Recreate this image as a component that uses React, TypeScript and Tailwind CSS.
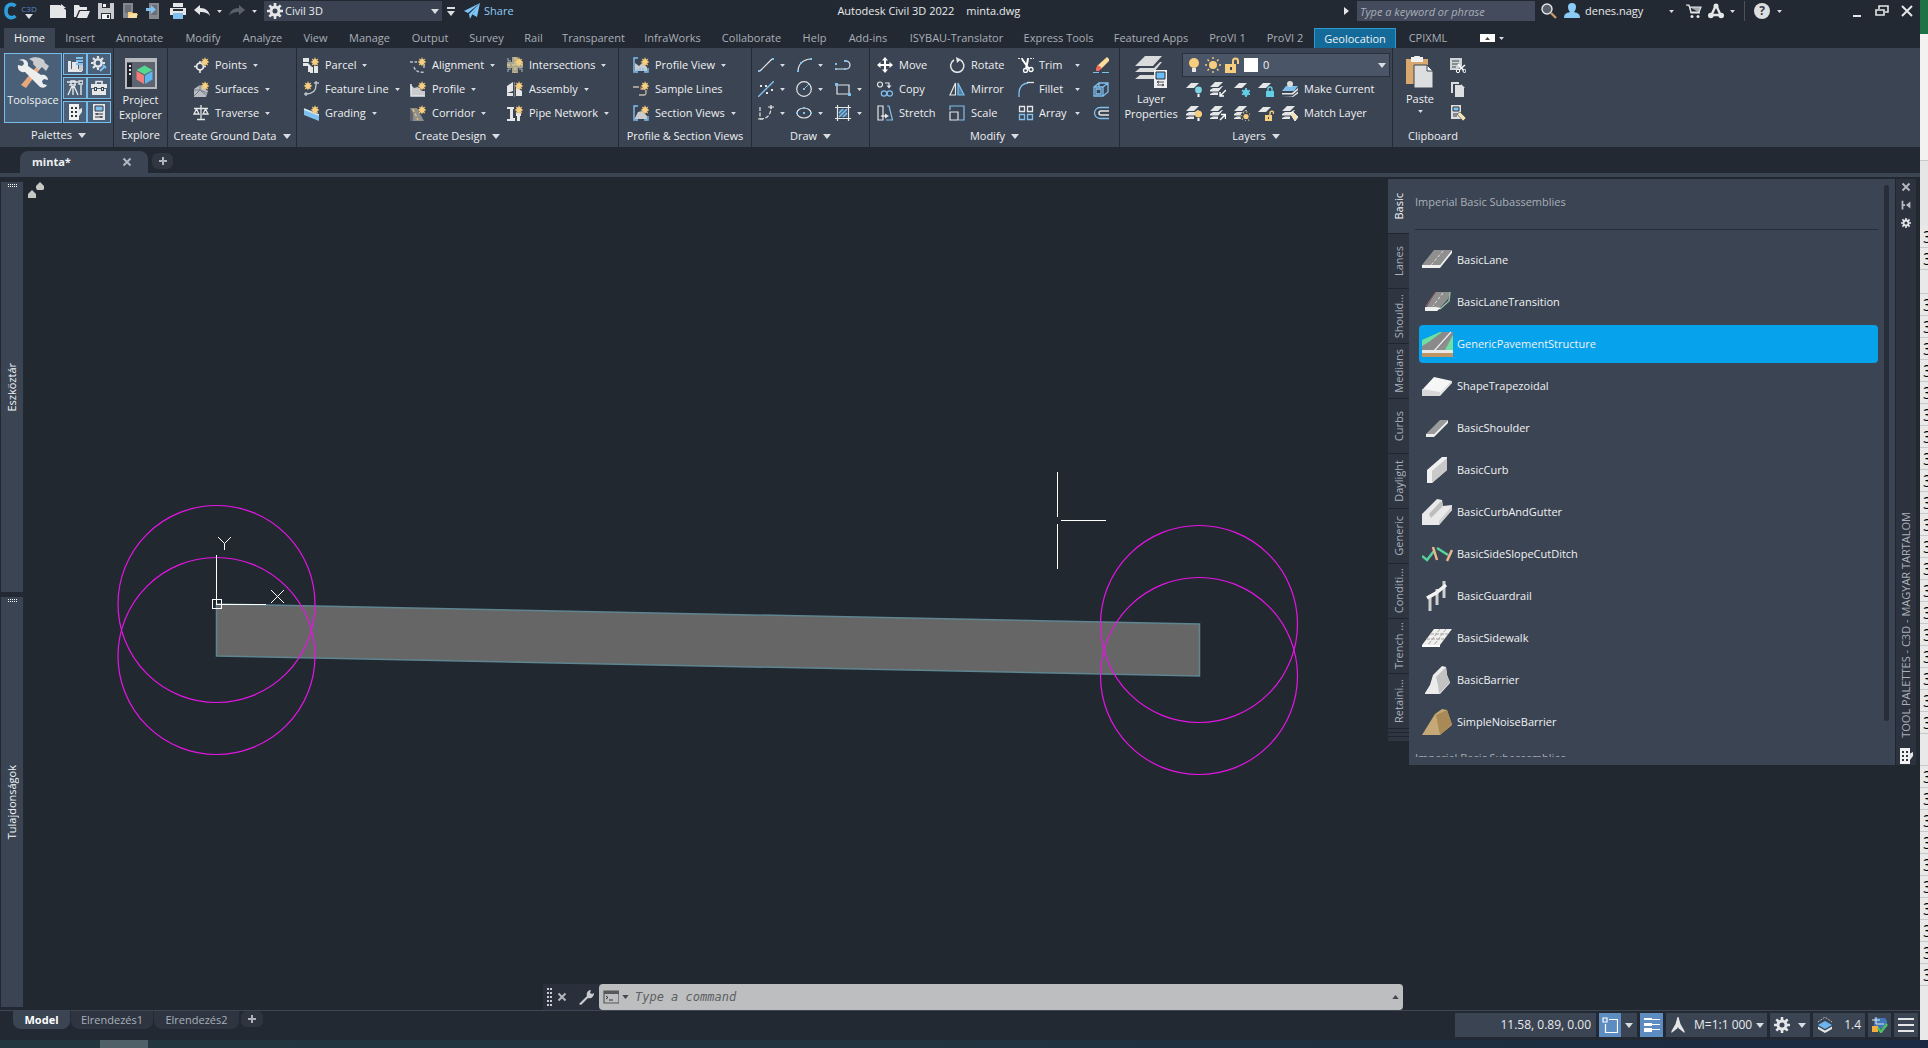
import type { ReactNode } from "react";
import { clsx } from "clsx";

type IconProps = { name: string; size?: number };

type RibbonItem = { icon: string; label: string; caret?: boolean };

const Y = "#f7ce7e";
const W = "#e4e6e8";
const B = "#7fc0ee";

const Spark = () => (
  <path
    d="M12 0l1 2.4L15.4 1.400 14.2 3.800 16.500 5l-2.300 1 1 2.400-2.300-1L12 9.600l-1-2.200-2.300 1 1-2.400L7.500 5l2.300-1.200-1-2.300 2.300 1z"
    fill={Y}
  />
);

const Sheets = () => (
  <path d="M5 1h8L8 6H0zM0 9l3-2h6l3-2h1L8.500 10.500H0zM0 13l3-1.500h5V14H0z" fill={W} />
);

const Sheet = () => <path d="M5 2h8L8 7H0z" fill={W} />;

const gear = (
  <>
    <circle cx="8" cy="8" r="4" fill="none" stroke={W} strokeWidth="3" />
    <path
      d="M8 0v3M8 13v3M0 8h3M13 8h3M2.300 2.300l2.200 2.200M11.500 11.500l2.200 2.200M2.300 13.700l2.200-2.200M11.500 4.500l2.200-2.200"
      stroke={W}
      strokeWidth="2.600"
    />
  </>
);

const icons: Record<string, ReactNode> = {
  gear,
  newFile: <path d="M0 2h10l6 5v8H0zM11 1l5 4h-5z" fill={W} />,
  open: <path d="M0 2h5l1 2h7v3H5L2 14H0zM6 8h10l-3 7H3z" fill={W} />,
  save: (
    <>
      <path d="M0 0h16v16H0z" fill="#c9cbce" />
      <path d="M4 0h8v5H4zM3 10h10v6H3z" fill="#2a303a" />
      <path d="M5 1h3v3H5zM4 11h8v5H4z" fill="#f1f1f1" />
      <path d="M9 12h2v3H9z" fill="#2a303a" />
    </>
  ),
  webOpen: (
    <>
      <path d="M1 0h10v8l-3 7H1z" fill="#85898f" />
      <path d="M3 2h6v8H3z" fill="#6a6f76" />
      <path d="M6 9h4l1 1h4v5H6z" fill={Y} />
      <path d="M8 11h8l-2 4H6z" fill="#f9dfa6" />
    </>
  ),
  webSave: (
    <>
      <path d="M3 0h10v16H3z" fill="#85898f" />
      <path d="M5 2h6v10H5z" fill="#6a6f76" />
      <path d="M0 5h5V2l5 4.500L5 11V8H0z" fill={B} />
    </>
  ),
  print: (
    <>
      <path d="M3 0h10v4H3zM0 5h16v7H0z" fill={W} />
      <path d="M3 6h10v2H3z" fill="#2a303a" />
      <path d="M3 10h10v6H3z" fill={B} />
    </>
  ),
  undo: <path d="M0 7l6-5v3c6 0 9 3 10 8-2-3-5-4-10-4v3z" fill={W} />,
  redo: <path d="M16 7l-6-5v3C4 5 1 8 0 13c2-3 5-4 10-4v3z" fill="#5a606a" />,
  share: <path d="M16 0L0 8l4 2zM16 0L5 11l1 5 2-4zM16 0L8.500 11.500 13 14z" fill="#7cc5f7" />,
  search: (
    <>
      <circle cx="6" cy="6" r="5" fill="#59606b" stroke={W} strokeWidth="1.400" />
      <path d="M10 10l5 5" stroke="#c39a6c" strokeWidth="2.400" />
    </>
  ),
  user: <path d="M8 0a4 4 0 0 1 4 4c0 2-1 4-2 5 4 1 6 2 6 6H0c0-4 2-5 6-6-1-1-2-3-2-5a4 4 0 0 1 4-4z" fill="#8ccbf7" />,
  cart: (
    <>
      <path d="M0 2h3l2 8h9M4 4h11l-2 5H5z" fill="#a3a7ac" stroke={W} strokeWidth="1.200" />
      <circle cx="6" cy="13.500" r="1.500" fill={W} />
      <circle cx="12" cy="13.500" r="1.500" fill={W} />
    </>
  ),
  appStore: (
    <>
      <path d="M8 2L3 13M8 2l5 11M3 12h10" stroke={W} strokeWidth="2.400" fill="none" />
      <circle cx="8" cy="3" r="2.500" fill={W} />
      <circle cx="2.800" cy="12.500" r="2.800" fill={W} />
      <circle cx="13.200" cy="12.500" r="2.800" fill={W} />
    </>
  ),
  min: <path d="M4 12h8v2H4z" fill={W} />,
  restore: <path d="M5 6V3h9v6h-3M2 7h8v5H2z" fill="none" stroke={W} strokeWidth="1.600" />,
  close: <path d="M3 3l10 10M13 3L3 13" stroke={W} strokeWidth="2" />,
  boldX: <path d="M4 4l8 8M12 4l-8 8" stroke="#b4b9c0" strokeWidth="2.200" />,
  plus: <path d="M8 4v8M4 8h8" stroke="#aeb3ba" strokeWidth="2" />,
  toolspace: (
    <>
      <path d="M4 28L20 9l3 3L9 31z" fill="#e9a77c" />
      <path d="M12 2c5-3 11-2 15 1l1 3 4 3-3 5-4-4-3 3-6-6c1-2 0-3-4-5z" fill="#c9cbce" />
      <path d="M2 3l4 1 1 3-2 2-4-1c-1 4 2 8 7 7l13 13c2 3 7 4 9 0l-4-1-1-3 2-2 4 1c0-4-4-6-7-5L11 9c1-5-4-8-9-6z" fill="#eceded" />
    </>
  ),
  explorer: (
    <>
      <path d="M1 2h30v29H1z" fill="#5d646f" stroke="#b6b9bd" strokeWidth="2" />
      <path d="M0 1h32v4H0z" fill="#b6b9bd" />
      <path d="M2 6h5v24H2z" fill="#20252d" />
      <path d="M4 8h2v2H4zM4 12h2v2H4zM4 16h2v2H4z" fill={W} />
      <path d="M11.500 13L19.500 8.500l8 4.500-8 4.500z" fill="#55d78e" />
      <path d="M11.500 14L19 18.500V27l-7.500-4.500z" fill="#f27b7b" />
      <path d="M27.500 14L20 18.500V27l7.500-4.500z" fill="#5cb6f2" />
    </>
  ),
  survey1: (
    <>
      <path d="M1 5h3v8h11v3H1zM5 6h6v8H5z" fill={W} />
      <path d="M9 1h7v2H9zM9 4h7v2H9zM9 7h7v2H9z" fill={B} />
      <path d="M12 9h4v6h-4z" fill="#c9cbce" />
    </>
  ),
  settings: (
    <>
      <circle cx="7" cy="7" r="3.600" fill="none" stroke={W} strokeWidth="2.400" />
      <path d="M7 0v2.500M7 11.500V14M0 7h2.500M11.500 7H14M2 2l2 2M10 4l2-2M2 12l2-2" stroke={W} strokeWidth="2.200" />
      <path d="M9 15l5-5M12 9l3 3" stroke={B} strokeWidth="2" />
    </>
  ),
  tripod: (
    <path d="M0 2h11M2 5h7M5 6L1 15M6 6v9M7 6l4 9M14 5v10M12 1h4v3h-4zM4 1h4v4H4z" fill="none" stroke={W} strokeWidth="1.400" />
  ),
  toolbox: (
    <>
      <path d="M5 4V1.500h6V4" fill="none" stroke={W} strokeWidth="1.600" />
      <path d="M0 4h16v4H0zM1 9h14v6H1z" fill={W} />
      <path d="M3 7h3v4H3zM10 7h3v4h-3z" fill="#3b4452" />
      <path d="M4 8h1v2H4zM11 8h1v2h-1z" fill={W} />
    </>
  ),
  sheetSet: (
    <>
      <path d="M2 0h10v16H2z" fill="#f1f1f1" />
      <path d="M4 3h2v2H4zM8 3h2v2H8zM4 7h2v2H4zM8 7h2v2H8zM4 11h2v2H4zM8 11h2v2H8z" fill="#30363f" />
      <path d="M11 6l4-2v4l-3 4z" fill={W} />
    </>
  ),
  props: (
    <>
      <path d="M2 0h12v16H2z" fill={W} />
      <path d="M4 2h8v5H4z" fill={B} stroke="#30363f" />
      <path d="M4 10h8M4 13h8M6 9v2M10 12v2" stroke="#30363f" strokeWidth="1.200" />
    </>
  ),
  points: (
    <>
      <circle cx="7" cy="9.500" r="3.400" fill="none" stroke={W} strokeWidth="1.800" />
      <path d="M7 4v3M7 12v4M1 9.500h3M10 9.500h3" stroke={W} strokeWidth="1.600" />
      <Spark />
    </>
  ),
  surfaces: (
    <>
      <path d="M1 8l6-4 8 6-2 6H1z" fill="#b9bdc2" />
      <path d="M1 15l6-6 7 6M7 9V4M1 9h6l7 3" stroke="#7a8089" fill="none" />
      <Spark />
    </>
  ),
  traverse: (
    <path d="M8 0v14M4 14.500h8M1 3.500h14M3.500 4L1 9h5zM12.500 4L10 9h5z" fill="none" stroke={W} strokeWidth="1.300" />
  ),
  parcel: (
    <>
      <path d="M0 1h6v4H0zM0 6h5l4 4v5H5V9H0zM7 10h3v6H7zM11 9h4v7h-4z" fill={W} />
      <Spark />
    </>
  ),
  featureLine: (
    <>
      <path d="M3 13c6 0 10-3 10-9M1 13h4M3 11v4M11 2h5M13 0v4" fill="none" stroke="#b9c2cc" strokeWidth="1.400" />
      <g transform="translate(-7 0)">
        <Spark />
      </g>
    </>
  ),
  grading: (
    <>
      <path d="M1 4l15 6v6L1 10z" fill={B} />
      <path d="M1 4l15 6" stroke="#d7ecfb" strokeWidth="1.500" />
      <Spark />
    </>
  ),
  alignment: (
    <>
      <path d="M0 5h7M4 10c1 4 5 6 11 5M14 8v4" fill="none" stroke="#b9c2cc" strokeWidth="1.400" strokeDasharray="3 1.500" />
      <Spark />
    </>
  ),
  profile: (
    <>
      <path d="M0 3l4 4 4-1 4 4h3v5H1z" fill="#c9cbce" />
      <path d="M1 3v12h14" fill="none" stroke={W} strokeWidth="1.400" />
      <Spark />
    </>
  ),
  corridor: (
    <>
      <path d="M0 3h7l7 13H3V9z" fill="#8e8f8c" />
      <path d="M3 4l5 11" stroke="#e9c46f" strokeWidth="1.400" strokeDasharray="3 2" />
      <path d="M0 3l3 6v7H0z" fill="#5d646f" />
      <Spark />
    </>
  ),
  intersections: (
    <>
      <path d="M5 0h6v16H5zM0 5h16v6H0z" fill="#a9a58c" />
      <path d="M8 0v16M0 8h16" stroke="#e5d59d" strokeDasharray="3 2" />
      <path d="M1 1v3h3M1 15v-3h3M15 15v-3h-3" stroke="#aeb6c0" fill="none" />
      <Spark />
    </>
  ),
  assembly: (
    <>
      <path d="M0 5l6-4v9l-6 2zM9 6l6 4v5H9zM0 12h6v3H0z" fill={W} />
      <path d="M7.500 1v15" stroke="#7a8089" strokeWidth="1.200" />
      <Spark />
    </>
  ),
  pipes: (
    <>
      <path d="M0 2h7v2H6v9h2v3H0v-2h3V4H0zM9 8h5v3h-1v5h-3v-5H9z" fill={W} />
      <Spark />
    </>
  ),
  profileView: (
    <>
      <path d="M2 6l4 3 3-3 5 4v4H2z" fill="#c9cbce" />
      <path d="M5 1H1v14h4M11 15h4v-4M4 12v2M7 11v3M10 11v3" fill="none" stroke={B} strokeWidth="1.400" />
      <Spark />
    </>
  ),
  sampleLines: (
    <>
      <path d="M0 6h6M8 8h4M6 14h5c2 0 2-1 2-3V9" fill="none" stroke="#c5b9ad" strokeWidth="1.400" />
      <path d="M8 6v3" stroke="#e08b6b" />
      <Spark />
    </>
  ),
  sectionViews: (
    <>
      <path d="M2 13l3-6 4-1 5 5v3H2z" fill="#c9cbce" />
      <path d="M5 1H1v14h4M11 15h4v-4" fill="none" stroke={B} strokeWidth="1.400" />
      <Spark />
    </>
  ),
  line: (
    <>
      <path d="M2 14L14 2" stroke={W} strokeWidth="1.200" />
      <path d="M0 13h2v2H0zM14 1h2v2h-2z" fill={B} />
    </>
  ),
  arc: (
    <>
      <path d="M2 15C2 7 7 3 14 2" stroke={W} fill="none" strokeWidth="1.200" />
      <path d="M1 13h2v2H1zM14 1h2v2h-2zM4 5h2v2H4z" fill={B} />
    </>
  ),
  polyline: (
    <>
      <path d="M1 12h10a4 4 0 0 0 0-8" stroke={W} fill="none" strokeWidth="1.200" />
      <path d="M0 11h2v2H0zM9 3h3v2H9zM9 11h2v2H9zM0 6h2v2H0z" fill={B} />
    </>
  ),
  xline: (
    <>
      <path d="M0 16L16 0" stroke={B} strokeWidth="1.400" />
      <path d="M2 4h2v2H2zM7 4h2v2H7zM8 11h2v2H8zM13 8h2v2h-2z" fill={W} />
    </>
  ),
  circle: (
    <>
      <circle cx="8" cy="8" r="7.300" fill="none" stroke={W} strokeWidth="1.200" />
      <path d="M8 8l5-5" stroke={B} />
      <path d="M7 7h2v2H7z" fill={B} />
    </>
  ),
  rect: (
    <>
      <path d="M2 4h12v9H2z" fill="none" stroke={W} strokeWidth="1.200" />
      <path d="M0 2h3v3H0zM13 12h3v3h-3z" fill={B} />
    </>
  ),
  spline: (
    <>
      <path d="M2 2v12M2 14c7 0 11-4 11-12" fill="none" stroke={W} strokeWidth="1.200" strokeDasharray="4 1.500" />
      <path d="M10 2h6M13 0v4M0 14h5" stroke={W} strokeWidth="1.200" />
    </>
  ),
  ellipse: (
    <>
      <ellipse cx="8" cy="8" rx="7" ry="5" fill="none" stroke={W} strokeWidth="1.200" />
      <path d="M7 7h2v2H7zM0 7h2v2H0zM14 7h2v2h-2zM7 2h2v2H7z" fill={B} />
    </>
  ),
  hatch: (
    <>
      <path d="M4 4h8v8H4z" fill="#4a6e8e" />
      <path d="M2.500 0v16M13.500 0v16M0 2.500h16M0 13.500h16" stroke={W} strokeWidth="1.200" />
      <path d="M4 8l4-4M4 12l8-8M8 12l4-4" stroke={B} strokeWidth="1.400" />
    </>
  ),
  move: (
    <path
      d="M8 0l3 3.500H9V7h3.500V5L16 8l-3.500 3V9H9v3.500h2L8 16l-3-3.500h2V9H3.500v2L0 8l3.500-3v2H7V3.500H5z"
      fill="#fff"
    />
  ),
  rotate: (
    <>
      <path d="M5 3a6.600 6.600 0 1 0 6.500 0" fill="none" stroke={W} strokeWidth="1.500" />
      <path d="M7 0l5 2.500L8 6z" fill={W} />
    </>
  ),
  copy: (
    <>
      <circle cx="3" cy="3.500" r="2.500" fill="none" stroke={W} strokeWidth="1.200" />
      <circle cx="7" cy="12.500" r="2.700" fill="none" stroke={B} strokeWidth="1.200" />
      <circle cx="12.800" cy="12.500" r="2.700" fill="none" stroke={B} strokeWidth="1.200" />
      <path d="M8 2h4v3" fill="none" stroke={W} strokeWidth="1.200" />
      <path d="M9.500 4.500h5L12 7.500z" fill={W} />
    </>
  ),
  mirror: (
    <>
      <path d="M6.500 2v12H1z" fill="none" stroke={W} strokeWidth="1.200" />
      <path d="M9 2v12h6z" fill="#4d84ad" stroke={B} strokeWidth="1.200" />
    </>
  ),
  stretch: (
    <>
      <path d="M1 1h5v14H1z" fill="none" stroke={W} strokeWidth="1.200" />
      <path d="M10 1h2l3.500 14H9" fill="none" stroke={B} strokeWidth="1.200" />
      <path d="M4 11h5" stroke={W} strokeWidth="1.400" />
      <path d="M8 8.500l4 2.500-4 2.500z" fill={W} />
    </>
  ),
  scale: (
    <>
      <path d="M1 5V1h14v14h-5" fill="none" stroke={B} strokeWidth="1.200" />
      <path d="M1 7h8v8H1z" fill="none" stroke={W} strokeWidth="1.200" />
    </>
  ),
  trim: (
    <>
      <path d="M0 1.500h6M9 1.500h7" stroke={W} strokeDasharray="2 1" />
      <path d="M4 2l7 10M10 2L8 12" stroke="#fff" strokeWidth="2" />
      <circle cx="7.500" cy="13.500" r="2" fill="none" stroke="#fff" strokeWidth="1.300" />
      <circle cx="13" cy="12.500" r="2" fill="none" stroke="#fff" strokeWidth="1.300" />
    </>
  ),
  fillet: (
    <>
      <path d="M1 16v-4C1 6 5 2 10 2" fill="none" stroke={B} strokeWidth="1.300" />
      <path d="M9 1.500h7" stroke={W} strokeWidth="1.300" />
    </>
  ),
  array: (
    <>
      <path d="M1.500 1.500h5v5h-5zM9.500 1.500h5v5h-5z" fill="none" stroke={W} strokeWidth="1.300" />
      <path d="M1.500 9.500h5v5h-5zM9.500 9.500h5v5h-5z" fill="none" stroke={B} strokeWidth="1.300" />
    </>
  ),
  erase: (
    <>
      <path d="M14 0l2 2v2L8 12l-4-3z" fill="#fbdc9c" />
      <path d="M5 8l4 3-3 3H3v-3z" fill="#ef6a5a" />
      <path d="M0 15.500h6M9 15.500h7" stroke={B} />
    </>
  ),
  explode: (
    <path d="M1 6h9v9H1zM3 8h5v5H3zM1 6l5-4h9v9l-5 4M10 6l5-4M6 2v4" fill="none" stroke={B} strokeWidth="1.300" />
  ),
  offset: (
    <>
      <path d="M16 2.500H7a5.500 5.500 0 0 0 0 11h9" fill="none" stroke={B} strokeWidth="1.300" />
      <path d="M16 6H8a2 2 0 0 0 0 4h8" fill="none" stroke={W} strokeWidth="1.500" />
    </>
  ),
  layerProps: (
    <>
      <path d="M10 0h17l-9 10H0zM0 16l5-4h14l6-6h2l-8 10zM0 23l5-4h14v4z" fill="#d9dbdd" />
      <path d="M19 14h13v18H19z" fill="#f1f1f1" />
      <path d="M21 16h9v7h-9z" fill="#6cbdf4" stroke="#262c36" />
      <path d="M22 26h7M22 29h7M24 25l-2 1 2 1.500M27 28l2 1-2 1" fill="none" stroke="#4a4f57" />
    </>
  ),
  bulb: (
    <>
      <circle cx="8" cy="6" r="5" fill={Y} />
      <path d="M6 11h4v4H6z" fill={W} />
    </>
  ),
  sun: (
    <>
      <circle cx="8" cy="8" r="4" fill={Y} />
      <path
        d="M8 0v2M8 14v2M0 8h2M14 8h2M2.500 2.500L4 4M12 12l1.500 1.500M2.500 13.500L4 12M12 4l1.500-1.500"
        stroke={Y}
        strokeWidth="1.400"
      />
    </>
  ),
  unlock: (
    <>
      <path d="M1 7h11v9H1z" fill={Y} />
      <path d="M9 7V4a2.500 2.500 0 0 1 5 0v3" fill="none" stroke={Y} strokeWidth="2" />
      <path d="M6 10h2v3H6z" fill="#3b4452" />
    </>
  ),
  layOff: (
    <>
      <Sheet />
      <circle cx="12.500" cy="9" r="3.400" fill="#7fd3e6" />
      <path d="M11.500 13h2v3h-2z" fill="#fff" />
    </>
  ),
  layIso: (
    <>
      <Sheets />
      <path d="M16 9l-5 5M10 11v4h4" stroke="#fff" fill="none" strokeWidth="1.400" />
    </>
  ),
  layFreeze: (
    <>
      <Sheet />
      <path d="M12 7v9M8 9.500l8 4M16 9.500l-8 4" stroke="#63cfe6" strokeWidth="1.800" />
      <circle cx="12" cy="11.500" r="2.500" fill="none" stroke="#63cfe6" strokeWidth="1.200" />
    </>
  ),
  layLock: (
    <>
      <Sheet />
      <path d="M8 10h8v6H8z" fill="#63cfe6" />
      <path d="M10 10V8a2 2 0 0 1 4 0v2" fill="none" stroke="#63cfe6" strokeWidth="1.400" />
    </>
  ),
  makeCurrent: (
    <>
      <path d="M4 5h12l-4 5H0z" fill={B} />
      <path d="M0 12h10l6-5v2l-5 4.500H0zM0 15.500h10l6-5v2L11 16z" fill={W} />
      <circle cx="8" cy="3" r="3" fill="#d9dbdd" />
    </>
  ),
  layOn: (
    <>
      <Sheets />
      <circle cx="12.500" cy="9" r="3.600" fill={Y} />
      <path d="M11.500 13h2v3h-2z" fill="#fff" />
    </>
  ),
  layUniso: (
    <>
      <Sheets />
      <path d="M10 15l5-5M11 9.500h4.500V14" stroke="#fff" fill="none" strokeWidth="1.400" />
    </>
  ),
  layThaw: (
    <>
      <Sheets />
      <circle cx="12" cy="11.500" r="5.500" fill="#3b4452" />
      <circle cx="12" cy="11.500" r="2.600" fill={Y} />
      <circle cx="12" cy="11.500" r="4.500" fill="none" stroke={Y} strokeDasharray="1 2.500" strokeWidth="1.400" />
    </>
  ),
  layUnlock: (
    <>
      <Sheet />
      <path d="M7 10h7v6H7z" fill={Y} />
      <path d="M12 10V8a1.800 1.800 0 0 1 3.600 0v1" fill="none" stroke={Y} strokeWidth="1.400" />
      <path d="M10 12h1v2h-1z" fill="#3b4452" />
    </>
  ),
  matchLayer: (
    <>
      <Sheets />
      <path d="M8 8l3-1 5 5-3 4z" fill="#f6e3b4" stroke="#fff" strokeWidth=".8" />
    </>
  ),
  paste: (
    <>
      <path d="M2 3h22v25H2z" fill="#d8a86f" />
      <path d="M7 1h3c0-2 6-2 6 0h3v5H7z" fill="#f1f1f1" />
      <path d="M10 9h13l6 6v17H10z" fill="#dcdee0" stroke="#3b4452" />
      <path d="M23 9v6h6z" fill="#f5f5f5" stroke="#3b4452" />
    </>
  ),
  cut: (
    <>
      <path d="M0 1h12v8l-5 4H0z" fill="#d0d3d6" />
      <path d="M2 4h7M2 7h7M2 10h4" stroke="#3b4452" />
      <path d="M8 7l7 8M15 8l-7 6" stroke="#fff" strokeWidth="1.500" />
      <circle cx="8" cy="14" r="1.700" fill="#3b4452" stroke="#fff" />
      <circle cx="14.500" cy="14" r="1.500" fill="#3b4452" stroke="#fff" />
    </>
  ),
  copyClip: (
    <path d="M1 1h8v2H3v9H1zM5 4h6l3 3v9H5zM11 3l4 4h-4z" fill="#dcdee0" />
  ),
  matchProps: (
    <>
      <path d="M1 0h10v14H1z" fill="#dcdee0" />
      <path d="M3 2h6v4H3z" fill={B} stroke="#30363f" />
      <path d="M3 9h6M3 11h4" stroke="#30363f" />
      <path d="M7 9l3-2 6 6-3 3z" fill="#f6e3b4" stroke="#3b4452" strokeWidth=".6" />
    </>
  ),
  wrench: (
    <path d="M1 15l8-8c-1-3 1-6 4-6l-1 3 2 1 2-1c0 4-3 6-6 5l-7 7z" fill="#c9cbce" />
  ),
  prompt: (
    <>
      <path d="M1 2h15v12H1z" fill="none" stroke="#55585c" strokeWidth="1.200" />
      <path d="M1 2h15v3H1z" fill="#55585c" />
      <path d="M3 7l2 1.500L3 10M6 11h4" fill="none" stroke="#333" />
    </>
  ),
  snap: (
    <>
      <path d="M7 2.500h8.500v13h-12V7" fill="none" stroke="#fff" strokeWidth="1.200" />
      <path d="M1 1h4v4H1z" fill="none" stroke="#fff" strokeWidth="1.200" />
    </>
  ),
  lineWeight: <path d="M0 1h8v2H0zM8 2h8v1H8zM0 6h8v3H0zM8 7h8v1H8zM0 11h8v4H0zM8 12h8v1H8z" fill="#fff" />,
  annotation: <path d="M7.500 0h1l2 7 4 7v2l-5-4H9l-1-2-1 2h-.5l-5 4v-2l4-7z" fill={W} />,
  layers: (
    <>
      <path d="M1 5l7-5 7 5" fill="none" stroke={W} strokeDasharray="1 1" />
      <path d="M8 4l7 4-7 4-7-4z" fill="#6cb4ee" />
      <path d="M1 9.500l7 4 7-4V12l-7 4-7-4z" fill={W} />
    </>
  ),
  health: (
    <>
      <path d="M2 1h11l2 3v6L9 12 2 9z" fill="#3e78b8" />
      <path d="M0 3h8M4 0v7M4 7h8" stroke={W} />
      <path d="M0 9h6v6H0z" fill="#f3b03f" />
      <path d="M6 11l3 4 6-8" fill="none" stroke="#4fc061" strokeWidth="2.400" />
    </>
  ),
  burger: <path d="M0 2h16M0 8h16M0 14h16" stroke={W} strokeWidth="1.800" />,
  cloud: (
    <path
      d="M8 4l4-4 2 2 2 2v3l-1 1H9L8 6zM0 12l4-4 2 2 2 2v4H0z"
      fill="#c6c8c4"
    />
  ),
  autoHide: <path d="M3 3h2v10H3zM5 7h2v2H5zM13 4v8L8 8z" fill="#b9bec5" />,
};

const Icon = ({ name, size = 16 }: IconProps) => (
  <svg width={size} height={size} viewBox={size > 24 ? "0 0 32 32" : "0 0 16 16"} className="shrink-0" aria-hidden="true">
    {icons[name]}
  </svg>
);

const Caret = ({ big = false }: { big?: boolean }) => (
  <svg width={big ? 8 : 5} height={big ? 5 : 3} viewBox="0 0 8 5" className="shrink-0" aria-hidden="true">
    <path d="M0 0h8L4 5z" fill="#d9dce0" />
  </svg>
);

// thumbnails of the subassembly catalogue, drawn on a 30x30 grid
const thumbs: Record<string, ReactNode> = {
  BasicLane: (
    <>
      <path d="M12 5h18L18 20H0z" fill="#8f8f8f" />
      <path d="M21 6L9 20" stroke="#ddd" strokeDasharray="3 2" />
      <path d="M0 20h18v3H0zM18 20L30 5v3L18 23z" fill="#efefef" />
    </>
  ),
  BasicLaneTransition: (
    <>
      <path d="M14 5h14l-2 7-8 9H4z" fill="#8f8f8f" />
      <path d="M14 5L4 19" stroke="#b06a6a" />
      <path d="M21 6L11 19" stroke="#ddd" strokeDasharray="3 2" />
      <path d="M28 5l-1 9-9 8" fill="none" stroke="#8fc0a0" strokeWidth="1.500" />
      <path d="M3 20h11l5 1-4 3H3z" fill="#efefef" />
    </>
  ),
  GenericPavementStructure: (
    <>
      <path d="M0 12L20 3h11v18H0z" fill="#8f8f8f" />
      <path d="M0 17v-6L18 3h7zM31 6v15h-8z" fill="#6fe0a0" />
      <path d="M20 3h11v3L16 21H0v-3z" fill="#8a8a8a" />
      <path d="M29 3L12 22" stroke="#eee" strokeWidth="1.200" />
      <path d="M0 21h31v3H0z" fill="#e8e8e8" />
      <path d="M0 24h31v4H0z" fill="#bf9564" />
    </>
  ),
  ShapeTrapezoidal: (
    <>
      <path d="M12 6l18 4-12 13L0 19z" fill="#f6f6f6" />
      <path d="M0 18l18 3v4H0z" fill="#d8d8d8" />
      <path d="M18 21L30 10v2L18 25z" fill="#e6e6e6" />
    </>
  ),
  BasicShoulder: (
    <>
      <path d="M18 7h8L12 21H4z" fill="#9a9a9a" />
      <path d="M4 21h8v3H4zM12 21L26 7v3L12 24z" fill="#ededed" />
    </>
  ),
  BasicCurb: (
    <>
      <path d="M5 15L20 2h5v13L10 28H5z" fill="#f0f0f0" />
      <path d="M10 16L25 3v12L10 28z" fill="#c9c9c9" />
    </>
  ),
  BasicCurbAndGutter: (
    <>
      <path d="M0 17L15 2l5 1 1 6 9-1v5L17 28H0z" fill="#e9e9e9" />
      <path d="M7 17L19 4l2 5-12 12z" fill="#bdbdbd" />
      <path d="M17 24L30 9v4L17 28z" fill="#cfcfcf" />
    </>
  ),
  BasicSideSlopeCutDitch: (
    <>
      <path d="M0 17l5 4 7-9M15 9l11 7" fill="none" stroke="#55d49b" strokeWidth="2.500" />
      <path d="M11 8l4 13M30 11l-5 11" stroke="#efb48c" strokeWidth="2.500" />
    </>
  ),
  BasicGuardrail: (
    <>
      <path d="M8 14v16M15 8v16M22 0v17" stroke="#cfcfcf" strokeWidth="3" />
      <path d="M5 17l9-5 10-8" fill="none" stroke="#f4f4f4" strokeWidth="3.500" />
    </>
  ),
  BasicSidewalk: (
    <>
      <path d="M12 6h18L18 22H0z" fill="#efefef" />
      <path d="M8 11h18M4 16h18M18 6L6 22M24 6L12 22" stroke="#a9a59e" strokeDasharray="4 1" />
      <path d="M0 22h18v2H0z" fill="#fff" />
    </>
  ),
  BasicBarrier: (
    <>
      <path d="M3 28l5-8 3-10 9-9 4 1 1 8 3 8-10 11H3z" fill="#ececec" />
      <path d="M14 12L24 2l1 8 3 7-11 12-1-9z" fill="#c2c2c2" />
    </>
  ),
  SimpleNoiseBarrier: (
    <>
      <path d="M0 28L13 7l7-5 5 1 5 15-12 10z" fill="#c6a877" />
      <path d="M25 3l5 14-12 11-4-20z" fill="#a98955" />
    </>
  ),
};

const menuTabs = [
  ["Home", "w-[51px]"],
  ["Insert", "w-[50px]"],
  ["Annotate", "w-[69px]"],
  ["Modify", "w-[58px]"],
  ["Analyze", "w-[61px]"],
  ["View", "w-[45px]"],
  ["Manage", "w-[63px]"],
  ["Output", "w-[58px]"],
  ["Survey", "w-[55px]"],
  ["Rail", "w-[39px]"],
  ["Transparent", "w-[81px]"],
  ["InfraWorks", "w-[77px]"],
  ["Collaborate", "w-[81px]"],
  ["Help", "w-[45px]"],
  ["Add-ins", "w-[62px]"],
  ["ISYBAU-Translator", "w-[115px]"],
  ["Express Tools", "w-[89px]"],
  ["Featured Apps", "w-[96px]"],
  ["ProVI 1", "w-[57px]"],
  ["ProVI 2", "w-[58px]"],
  ["Geolocation", "w-[82px]"],
  ["CPIXML", "w-[64px]"],
];

const groundData: RibbonItem[] = [
  { icon: "points", label: "Points", caret: true },
  { icon: "surfaces", label: "Surfaces", caret: true },
  { icon: "traverse", label: "Traverse", caret: true },
];

const design: RibbonItem[][] = [
  [
    { icon: "parcel", label: "Parcel", caret: true },
    { icon: "featureLine", label: "Feature Line", caret: true },
    { icon: "grading", label: "Grading", caret: true },
  ],
  [
    { icon: "alignment", label: "Alignment", caret: true },
    { icon: "profile", label: "Profile", caret: true },
    { icon: "corridor", label: "Corridor", caret: true },
  ],
  [
    { icon: "intersections", label: "Intersections", caret: true },
    { icon: "assembly", label: "Assembly", caret: true },
    { icon: "pipes", label: "Pipe Network", caret: true },
  ],
];

const views: RibbonItem[] = [
  { icon: "profileView", label: "Profile View", caret: true },
  { icon: "sampleLines", label: "Sample Lines" },
  { icon: "sectionViews", label: "Section Views", caret: true },
];

const modify: RibbonItem[][] = [
  [
    { icon: "move", label: "Move" },
    { icon: "copy", label: "Copy" },
    { icon: "stretch", label: "Stretch" },
  ],
  [
    { icon: "rotate", label: "Rotate" },
    { icon: "mirror", label: "Mirror" },
    { icon: "scale", label: "Scale" },
  ],
];

const paletteTabs = [
  "Basic",
  "Lanes",
  "Should...",
  "Medians",
  "Curbs",
  "Daylight",
  "Generic",
  "Conditi...",
  "Trench ...",
  "Retaini...",
];

// row heights of the worksheet that peeks out behind the window; true = row holds a value
const sheetRows: [string, boolean][] = [
  ["h-[22px]", true],
  ["h-[22px]", true],
  ["h-[24px]", false],
  ...Array.from({ length: 20 }, (): [string, boolean] => ["h-[22px]", true]),
  ["h-[32px]", false],
  ...Array.from({ length: 10 }, (): [string, boolean] => ["h-[22px]", true]),
];

const ToolButton = ({ icon, label, caret }: RibbonItem) => (
  <button type="button" className="flex h-6 items-center gap-[6px] whitespace-nowrap">
    <Icon name={icon} />
    <span>{label}</span>
    {caret && <Caret />}
  </button>
);

const Panel = ({
  title,
  caret = true,
  className,
  children,
}: {
  title: string;
  caret?: boolean;
  className: string;
  children: ReactNode;
}) => (
  <section className={clsx("flex h-full flex-col border-r border-[#232a34] pt-[5px]", className)}>
    <div className="flex h-[72px]">{children}</div>
    <h2 className="flex h-[26px] items-center justify-center gap-[6px] whitespace-nowrap">
      {title}
      {caret && <Caret big />}
    </h2>
  </section>
);

const TitleBar = () => (
  <header className="flex h-7 items-center bg-[#232932] pb-[6px]">
    <svg width="14" height="18" viewBox="0 0 14 18" className="ml-[3px]" aria-hidden="true">
      <path d="M12.500 4C9 1 3 2 3 9s6 8 9.500 5" fill="none" stroke="#2e9fdc" strokeWidth="3.600" />
    </svg>
    <button type="button" className="ml-1 flex w-4 flex-col items-center text-[8px] leading-[10px] text-[#5487c4]" aria-label="Application menu">
      C3D
      <Caret big />
    </button>
    <div className="ml-[13px] flex items-center gap-2">
      <Icon name="newFile" />
      <Icon name="open" />
      <Icon name="save" />
      <Icon name="webOpen" />
      <Icon name="webSave" />
      <Icon name="print" />
    </div>
    <div className="ml-2 flex items-center gap-[7px]">
      <Icon name="undo" />
      <Caret />
      <Icon name="redo" />
      <Caret />
    </div>
    <div className="ml-[7px] flex h-5 w-[178px] items-center bg-[#3b4353] px-[3px] text-[#e8eaec]">
      <Icon name="gear" />
      <select aria-label="Workspace" className="ml-[2px] min-w-0 flex-1 appearance-none bg-transparent text-[11px] outline-none">
        <option>Civil 3D</option>
      </select>
      <Caret big />
    </div>
    <button type="button" className="ml-[5px] flex w-2 flex-col items-center gap-[2px]" aria-label="Customize">
      <span className="h-[2px] w-full bg-[#d9dce0]" />
      <Caret big />
    </button>
    <button type="button" className="ml-[9px] flex items-center gap-1 text-[#8ccbf7]">
      <Icon name="share" />
      Share
    </button>
    <h1 className="flex flex-1 justify-center gap-3 whitespace-nowrap text-[#e8eaec]">
      <span>Autodesk Civil 3D 2022</span>
      <span>minta.dwg</span>
    </h1>
    <svg width="5" height="8" viewBox="0 0 5 8" className="mr-2" aria-hidden="true">
      <path d="M0 0l5 4-5 4z" fill={W} />
    </svg>
    <input
      aria-label="Search"
      placeholder="Type a keyword or phrase"
      className="h-5 w-[178px] bg-[#434b5c] px-[3px] text-[11px] italic outline-none placeholder:text-[#a9afb9]"
    />
    <button type="button" aria-label="Find" className="ml-[6px]">
      <Icon name="search" />
    </button>
    <button type="button" className="ml-[7px] flex w-[110px] items-center gap-[5px] text-[#e8eaec]">
      <Icon name="user" />
      <span className="flex-1 text-left">denes.nagy</span>
      <Caret />
    </button>
    <div className="ml-3 flex items-center gap-[6px]">
      <Icon name="cart" />
      <Icon name="appStore" />
      <Caret />
    </div>
    <span className="mx-[9px] h-5 w-px bg-[#4b525e]" />
    <button type="button" aria-label="Help" className="flex items-center gap-[7px]">
      <span className="flex size-4 items-center justify-center rounded-full bg-[#dcdee0] text-[12px] font-bold text-[#333a45]">?</span>
      <Caret />
    </button>
    <div className="mr-[5px] ml-[67px] flex items-center gap-[9px]">
      <button type="button" aria-label="Minimize">
        <Icon name="min" />
      </button>
      <button type="button" aria-label="Restore">
        <Icon name="restore" />
      </button>
      <button type="button" aria-label="Close">
        <Icon name="close" />
      </button>
    </div>
  </header>
);

const MenuTabs = () => (
  <nav className="flex h-5 items-stretch bg-[#232932] pl-1 text-[#a9afb8]">
    {menuTabs.map(([label, width]) => (
      <button
        key={label}
        type="button"
        className={clsx(
          "whitespace-nowrap text-center",
          width,
          label === "Home" && "bg-[#3b4452] text-[#f0f2f4]",
          label === "Geolocation" && "border border-b-0 border-[#2a9bd0] bg-[#146a98] text-[#f0f2f4]"
        )}
      >
        {label}
      </button>
    ))}
    <button type="button" aria-label="Ribbon display" className="ml-5 flex items-center gap-1">
      <span className="flex h-2 w-[15px] items-center justify-center bg-white">
        <svg width="5" height="3" viewBox="0 0 8 5" aria-hidden="true">
          <path d="M0 5h8L4 0z" fill="#444" />
        </svg>
      </span>
      <Caret />
    </button>
  </nav>
);

const Ribbon = () => (
  <div className="flex h-[99px] bg-[#3b4452] text-[#eef0f2]">
    <Panel title="Palettes" className="w-[114px] pl-1">
      <button type="button" className="flex w-[58px] flex-col items-center border border-[#76bdee] bg-[#4a6078] pt-[3px]">
        <Icon name="toolspace" size={32} />
        <span className="mt-[3px] leading-[15px]">Toolspace</span>
      </button>
      <div className="ml-px grid grid-cols-2 content-center gap-y-[2px]">
        {["survey1", "settings", "tripod", "toolbox", "sheetSet", "props"].map((icon) => (
          <button
            key={icon}
            type="button"
            aria-label={icon}
            className="flex h-[22px] w-6 items-center justify-center border border-[#76bdee] bg-[#4a6078]"
          >
            <Icon name={icon} />
          </button>
        ))}
      </div>
    </Panel>
    <Panel title="Explore" caret={false} className="w-[54px]">
      <button type="button" className="flex w-full flex-col items-center pt-1">
        <Icon name="explorer" size={32} />
        <span className="mt-[3px] leading-[15px]">
          Project
          <br />
          Explorer
        </span>
      </button>
    </Panel>
    <Panel title="Create Ground Data" className="w-[129px]">
      <div className="pl-[25px]">
        {groundData.map((item) => (
          <ToolButton key={item.label} {...item} />
        ))}
      </div>
    </Panel>
    <Panel title="Create Design" className="w-[322px]">
      <div className="grid grid-cols-[107px_97px_auto] pl-[6px]">
        {design.map((column) => (
          <div key={column[0].label}>
            {column.map((item) => (
              <ToolButton key={item.label} {...item} />
            ))}
          </div>
        ))}
      </div>
    </Panel>
    <Panel title="Profile & Section Views" caret={false} className="w-[133px]">
      <div className="pl-[14px]">
        {views.map((item) => (
          <ToolButton key={item.label} {...item} />
        ))}
      </div>
    </Panel>
    <Panel title="Draw" className="w-[118px]">
      <div className="grid grid-cols-[38px_39px_auto] pl-[6px]">
        {["line", "arc", "polyline", "xline", "circle", "rect", "spline", "ellipse", "hatch"].map((icon) => (
          <button key={icon} type="button" aria-label={icon} className="flex h-6 items-center gap-[6px]">
            <Icon name={icon} />
            {icon !== "polyline" && <Caret />}
          </button>
        ))}
      </div>
    </Panel>
    <Panel title="Modify" className="w-[250px]">
      <div className="grid grid-cols-[72px_69px_75px_auto] pl-[7px]">
        {modify.map((column) => (
          <div key={column[0].label}>
            {column.map((item) => (
              <ToolButton key={item.label} {...item} />
            ))}
          </div>
        ))}
        <div>
          {[
            ["trim", "Trim"],
            ["fillet", "Fillet"],
            ["array", "Array"],
          ].map(([icon, label]) => (
            <button key={icon} type="button" className="flex h-6 w-[62px] items-center gap-[5px]">
              <Icon name={icon} />
              <span className="flex-1 text-left">{label}</span>
              <Caret />
            </button>
          ))}
        </div>
        <div>
          {["erase", "explode", "offset"].map((icon) => (
            <button key={icon} type="button" aria-label={icon} className="flex h-6 items-center">
              <Icon name={icon} />
            </button>
          ))}
        </div>
      </div>
    </Panel>
    <Panel title="Layers" className="w-[273px]">
      <button type="button" className="flex w-[62px] flex-col items-center pt-[3px]">
        <Icon name="layerProps" size={32} />
        <span className="mt-[3px] leading-[15px]">
          Layer
          <br />
          Properties
        </span>
      </button>
      <div className="flex-1 pr-[2px]">
        <div className="flex h-6 items-center gap-[3px] border border-[#2a313c] bg-[#4b5568] px-[3px]">
          <Icon name="bulb" />
          <Icon name="sun" />
          <Icon name="unlock" />
          <span className="ml-px size-[14px] bg-white" />
          <select aria-label="Layer" className="ml-[2px] min-w-0 flex-1 appearance-none bg-transparent text-[11px] outline-none">
            <option>0</option>
          </select>
          <Caret big />
        </div>
        {[
          ["layOff", "layIso", "layFreeze", "layLock", "makeCurrent", "Make Current"],
          ["layOn", "layUniso", "layThaw", "layUnlock", "matchLayer", "Match Layer"],
        ].map((row) => (
          <div key={row[5]} className="flex h-6 items-center gap-2 pl-1">
            {row.slice(0, 4).map((icon) => (
              <button key={icon} type="button" aria-label={icon}>
                <Icon name={icon} />
              </button>
            ))}
            <ToolButton icon={row[4]} label={row[5]} />
          </div>
        ))}
      </div>
    </Panel>
    <Panel title="Clipboard" caret={false} className="w-20 border-r-0">
      <button type="button" className="ml-[7px] flex w-10 flex-col items-center pt-[3px]">
        <Icon name="paste" size={32} />
        <span className="mt-[3px] mb-1 leading-[15px]">Paste</span>
        <Caret />
      </button>
      <div className="ml-[10px]">
        {["cut", "copyClip", "matchProps"].map((icon) => (
          <button key={icon} type="button" aria-label={icon} className="flex h-6 items-center">
            <Icon name={icon} />
          </button>
        ))}
      </div>
    </Panel>
  </div>
);

const FileTabs = () => (
  <div className="flex h-[30px] items-end border-b-4 border-[#3b4453] bg-[#232932] pl-5 text-[#eef0f2]">
    <div className="flex h-[22px] w-[128px] items-center rounded-t-lg bg-[#3b4453] pr-[14px] pl-3 font-bold">
      <span className="flex-1">minta*</span>
      <button type="button" aria-label="Close tab">
        <Icon name="boldX" size={14} />
      </button>
    </div>
    <button type="button" aria-label="New tab" className="mb-1 ml-1 flex h-4 w-[21px] items-center justify-center rounded-md bg-[#303743]">
      <Icon name="plus" />
    </button>
  </div>
);

const DockedPanel = ({ label }: { label: string }) => (
  <div className="relative flex flex-1 items-center justify-center bg-[#3b4453]">
    <span className="absolute top-[2px] h-[3px] w-[9px] border-y border-dotted border-white" />
    <span className="rotate-180 text-[#f0f2f4] [writing-mode:vertical-rl]">{label}</span>
  </div>
);

const Drawing = () => (
  <svg className="absolute inset-0 h-full w-full" aria-label="Model space">
    <g transform="translate(-24 -177)">
      <path d="M216.500 604L1199.500 624v52L216.500 656z" fill="#666" stroke="#5f8590" strokeWidth="1.500" />
      <g fill="none" stroke="#e614e6" strokeWidth="1.200">
        <circle cx="216.500" cy="604" r="98.500" />
        <circle cx="216.500" cy="656" r="98.500" />
        <circle cx="1199" cy="624" r="98.500" />
        <circle cx="1199" cy="676" r="98.500" />
      </g>
      <g fill="none" stroke="#fff" shapeRendering="crispEdges">
        <path d="M216.500 555v49.500H266M212.500 599.500h9v9h-9z" />
        <path d="M1057.500 472v45M1057.500 524v45M1061 520.500h45" />
      </g>
      <path d="M218 537l6.500 6.500 6.500-6.500M224.500 543.500v6.500M271 590l13 13M284 590l-13 13" fill="none" stroke="#fff" />
    </g>
  </svg>
);

const ToolPalette = () => (
  <aside className="absolute top-[2px] right-1 flex h-[586px] w-[528px] text-[#a9b0ba]">
    <div className="flex w-[21px] flex-col">
      {paletteTabs.map((tab, i) => (
        <button
          key={tab}
          type="button"
          className={clsx(
            "flex h-[55px] items-center justify-center border-b border-[#20262f]",
            i === 0 ? "bg-[#3b4452] text-[#f0f2f4]" : "bg-[#2f3541]"
          )}
        >
          <span className="rotate-180 [writing-mode:vertical-rl]">{tab}</span>
        </button>
      ))}
      <span className="h-1 border-b border-[#20262f] bg-[#2f3541]" />
      <span className="h-1 border-b border-[#20262f] bg-[#2f3541]" />
      <span className="h-1 bg-[#2f3541]" />
    </div>
    <div className="flex flex-1 bg-[#3b4452] pt-[6px] pl-[6px]">
      <div className="flex-1 overflow-hidden">
        <h2 className="h-[45px] border-b border-[#262d38] pt-2 leading-[18px]">Imperial Basic Subassemblies</h2>
        <ul className="flex flex-col gap-1 pt-[11px] pl-1 text-[#f0f2f4]">
          {Object.keys(thumbs).map((name) => (
            <li key={name}>
              <button
                type="button"
                className={clsx(
                  "flex h-[38px] w-full items-center gap-1 rounded-sm pl-[3px]",
                  name === "GenericPavementStructure" && "bg-[#07a2ec]"
                )}
              >
                <svg width="31" height="30" viewBox="0 0 31 30" aria-hidden="true">
                  {thumbs[name]}
                </svg>
                {name}
              </button>
            </li>
          ))}
        </ul>
        <p className="mt-3 h-1 overflow-hidden leading-[10px]">Imperial Basic Subassemblies</p>
      </div>
      <div className="mr-[6px] ml-[6px] h-[536px] w-[5px] rounded-sm bg-[#272e39]" />
    </div>
    <div className="flex w-[21px] flex-col items-center border-l border-[#20262f] bg-[#2c323e] py-[1px]">
      <button type="button" aria-label="Close palette" className="mb-1">
        <Icon name="boldX" size={14} />
      </button>
      <button type="button" aria-label="Auto-hide" className="mb-1">
        <Icon name="autoHide" size={14} />
      </button>
      <button type="button" aria-label="Palette properties" className="mt-[2px]">
        <Icon name="gear" size={10} />
      </button>
      <span className="mt-auto rotate-180 whitespace-nowrap [writing-mode:vertical-rl]">TOOL PALETTES - C3D - MAGYAR TARTALOM</span>
      <span className="mt-[10px]">
        <Icon name="sheetSet" />
      </span>
    </div>
  </aside>
);

const CommandLine = () => (
  <form className="absolute bottom-0 left-[519px] flex h-[26px] w-[860px] bg-[#2a303b]">
    <div className="flex w-14 items-center gap-[3px] pl-1">
      <span className="h-[18px] w-[5px] border-x-2 border-dotted border-[#c9cbce]" />
      <Icon name="boldX" size={14} />
      <span className="ml-[6px]">
        <Icon name="wrench" />
      </span>
    </div>
    <div className="flex flex-1 items-center rounded-sm bg-[#bcbebf] px-1">
      <Icon name="prompt" />
      <svg width="7" height="4" viewBox="0 0 8 5" className="ml-[3px]" aria-hidden="true">
        <path d="M0 0h8L4 5z" fill="#44474b" />
      </svg>
      <input
        aria-label="Command"
        placeholder="Type a command"
        className="ml-[6px] min-w-0 flex-1 bg-transparent font-['DejaVu_Sans_Mono',monospace] text-[12px] italic outline-none placeholder:text-[#5c5f63]"
      />
      <svg width="7" height="4" viewBox="0 0 8 5" aria-hidden="true">
        <path d="M0 5h8L4 0z" fill="#44474b" />
      </svg>
    </div>
  </form>
);

const StatusBar = () => (
  <footer className="flex h-[30px] justify-between border-t border-[#3f4653] bg-[#232932] text-[#a9b0ba]">
    <div className="flex h-[18px] gap-px pl-[13px]">
      <button type="button" className="w-[57px] rounded-b-lg bg-[#3b4453] font-bold text-white">
        Model
      </button>
      <button type="button" className="w-[82px] rounded-b-lg bg-[#2e3541]">
        Elrendezés1
      </button>
      <button type="button" className="w-[85px] rounded-b-lg bg-[#2e3541]">
        Elrendezés2
      </button>
      <button type="button" aria-label="New layout" className="ml-px flex h-4 w-[22px] items-center justify-center rounded-md bg-[#2e3541]">
        <Icon name="plus" />
      </button>
    </div>
    <div className="mt-[2px] flex h-6 gap-[3px] pr-[2px] text-[12px] text-[#e8eaec]">
      <output className="flex w-[141px] items-center justify-end bg-[#3b4453] pr-[5px]">11.58, 0.89, 0.00</output>
      <div className="flex bg-[#3b4453]">
        <button type="button" aria-label="Snap" className="flex w-[22px] items-center justify-center bg-[#5d8cc0]">
          <Icon name="snap" />
        </button>
        <button type="button" aria-label="Snap options" className="flex w-4 items-center justify-center">
          <Caret big />
        </button>
      </div>
      <button type="button" aria-label="Line weight" className="flex w-[23px] items-center justify-center bg-[#5d8cc0]">
        <Icon name="lineWeight" />
      </button>
      <button type="button" className="flex w-[101px] items-center gap-1 bg-[#3b4453] px-[4px]">
        <Icon name="annotation" />
        <span className="ml-1 flex-1 whitespace-nowrap text-left">M=1:1 000</span>
        <Caret big />
      </button>
      <button type="button" aria-label="Workspace switching" className="flex w-10 items-center justify-between bg-[#3b4453] px-1">
        <Icon name="gear" />
        <Caret big />
      </button>
      <button type="button" className="flex w-[52px] items-center justify-between bg-[#3b4453] px-1">
        <Icon name="layers" />
        1.4
      </button>
      <button type="button" aria-label="Drawing health" className="flex w-[23px] items-center justify-center bg-[#3b4453]">
        <Icon name="health" />
      </button>
      <button type="button" aria-label="Customization" className="flex w-6 items-center justify-center bg-[#3b4453]">
        <Icon name="burger" />
      </button>
    </div>
  </footer>
);

const Worksheet = () => (
  <div className="w-2 shrink-0 overflow-hidden bg-[#e9e9e9] text-black">
    <div className="h-[34px] bg-[#1f7245]" />
    <div className="h-[126px] bg-[#f3f2f1]" />
    <div className="h-[66px] border-t border-[#c9c9c9] bg-[#e6e6e6]" />
    {sheetRows.map(([height, filled], i) => (
      <div key={i} className={clsx("overflow-hidden border-b border-[#c9c9c9] pl-[3px] text-[16px] leading-[22px]", height)}>
        {filled && "3"}
      </div>
    ))}
  </div>
);

const App = () => {
  return (
    <div className="flex h-screen w-full flex-col overflow-hidden bg-[#212830] font-['Open_Sans',sans-serif] text-[11px] leading-4">
      <div className="flex min-h-0 flex-1">
        <div className="flex min-w-0 flex-1 flex-col">
          <TitleBar />
          <MenuTabs />
          <Ribbon />
          <FileTabs />
          <main className="flex min-h-0 flex-1">
            <div className="flex w-6 flex-col gap-[5px] bg-[#232932] pt-[5px] pr-px pb-[3px] pl-px">
              <DockedPanel label="Eszköztár" />
              <DockedPanel label="Tulajdonságok" />
            </div>
            <div className="relative flex-1">
              <Drawing />
              <span className="absolute top-[5px] left-1">
                <Icon name="cloud" />
              </span>
              <ToolPalette />
              <CommandLine />
            </div>
          </main>
          <StatusBar />
        </div>
        <Worksheet />
      </div>
      <div className="flex h-2 justify-between overflow-hidden bg-linear-to-r from-[#223740] via-[#20333f] to-[#1c2942] pr-[85px] pl-[100px]">
        <span className="w-12 bg-[#4f6068]" />
        <span className="pt-[5px] leading-4 text-white">11:23</span>
      </div>
    </div>
  );
};

export default App;
